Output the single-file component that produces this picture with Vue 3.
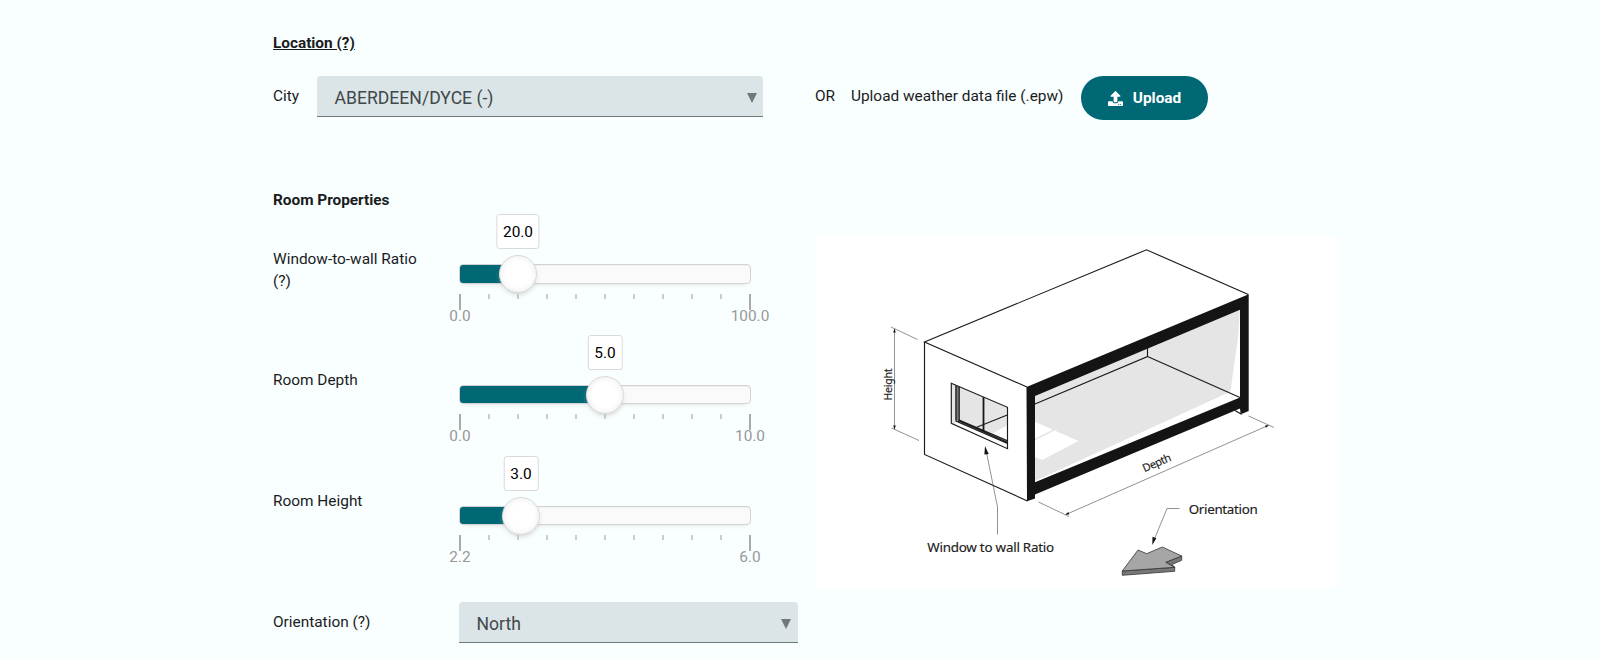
<script setup>
const sliders = [
  { label: 'Window-to-wall Ratio (?)', value: '20.0', min: '0.0', max: '100.0', percent: 20 },
  { label: 'Room Depth', value: '5.0', min: '0.0', max: '10.0', percent: 50 },
  { label: 'Room Height', value: '3.0', min: '2.2', max: '6.0', percent: 21.05 }
]
</script>

<template>
  <main class="page">
    <h2 class="heading underlined">Location (?)</h2>
    <section class="location">
      <div class="city">
        <label class="label">City</label>
        <div class="select">
          <span>ABERDEEN/DYCE (-)</span>
          <svg class="caret" viewBox="0 0 10 10"><path d="M0 0h10L5 10z" /></svg>
        </div>
      </div>
      <div class="upload">
        <span class="label or">OR</span>
        <span class="label file">Upload weather data file (.epw)</span>
        <button class="button" type="button">
          <svg class="icon" viewBox="0 0 512 512"><path d="M296 384h-80c-13.3 0-24-10.7-24-24V192h-87.7c-17.8 0-26.7-21.5-14.1-34.1L242.3 5.7c7.5-7.5 19.8-7.5 27.3 0l152.2 152.2c12.6 12.6 3.7 34.1-14.1 34.1H320v168c0 13.3-10.7 24-24 24zm216-8v112c0 13.3-10.7 24-24 24H24c-13.3 0-24-10.7-24-24V376c0-13.3 10.7-24 24-24h136v8c0 30.9 25.1 56 56 56h80c30.9 0 56-25.1 56-56v-8h136c13.3 0 24 10.7 24 24zm-124 88c0-11-9-20-20-20s-20 9-20 20 9 20 20 20 20-9 20-20zm64 0c0-11-9-20-20-20s-20 9-20 20 9 20 20 20 20-9 20-20z" /></svg>
          <span>Upload</span>
        </button>
      </div>
    </section>

    <section class="room">
      <div class="controls">
        <h2 class="heading">Room Properties</h2>
        <div v-for="s in sliders" :key="s.label" class="row">
          <label class="label">{{ s.label }}</label>
          <div class="slider">
            <div class="track">
              <div class="fill" :style="{ width: s.percent + '%' }"></div>
              <div class="handle" :style="{ left: s.percent + '%' }">
                <div class="tooltip">{{ s.value }}</div>
              </div>
            </div>
            <div class="ticks"><i v-for="n in 11" :key="n"></i></div>
            <div class="range"><span>{{ s.min }}</span><span>{{ s.max }}</span></div>
          </div>
        </div>
        <div class="row orientation">
          <label class="label">Orientation (?)</label>
          <div class="select">
            <span>North</span>
            <svg class="caret" viewBox="0 0 10 10"><path d="M0 0h10L5 10z" /></svg>
          </div>
        </div>
      </div>

      <svg class="diagram" viewBox="815 237 525 350">
        <rect x="815" y="237" width="525" height="350" fill="#fff" />
        <!-- room interior -->
        <path d="M1035 395L1240 309 1238 338 1230.3 391.7 1035 481z" fill="#e5e5e5" />
        <path d="M1035 421.7L1078.3 441 1042.3 460 1035 457z" fill="#fff" />
        <path d="M1035 439.5L1054 430" stroke="#e5e5e5" stroke-width="1.5" />
        <path d="M1147.5 348V356.5L1035 404M1147.5 356.5L1240 397.5" class="line" />
        <!-- outer shell -->
        <path d="M1027 387L924.5 342 1146.5 249.8 1248.3 294.5M924.5 342V454.5L1027.5 501" class="line" />
        <path d="M1235 410.5L1241 414V408" class="line" />
        <path fill-rule="evenodd" d="M1026.5 387L1248.7 294.3V411L1241.5 414 1240 408.5 1035 494.5V498.5L1027 501.3zM1035 396V482.3L1240 397.4V309.7z" fill="#141414" />
        <!-- window -->
        <path d="M951.3 383.3L1007.5 407.3V448.7L951.3 423.3z" fill="#fff" />
        <path d="M951.3 383.3L1007.5 407.3V442L951.3 419z" fill="#e5e5e5" />
        <path d="M993 433L1007 425.5V440z" fill="#fff" />
        <path d="M955.5 421L1007.5 443.5V448.7L955.5 425z" fill="#fff" />
        <path d="M951.3 383.3L955.5 385V424.5L951.3 423.3z" fill="#e5e5e5" />
        <path d="M976.7 427.3L1007.3 415" class="line" />
        <path d="M955.3 385.2L959.5 387V421L955.3 420z" fill="#777" />
        <path d="M956 385.5V421L1007.5 443.5M959.2 387V420L1007.5 440.8M958 420.5L1007.5 442.2" class="line" />
        <path d="M983.5 397V432" stroke="#171717" stroke-width="1.8" />
        <path d="M951.3 383.3L1007.5 407.3V448.7L951.3 423.3z" class="line" />
        <!-- dimension lines -->
        <g class="thin">
          <path d="M894.5 329V429M891 327L917.5 339.5M891.5 428L919 440.5" />
          <path d="M1066 514.5L1268 425.5M1038.5 502L1069 516.5M1248.5 416L1274 427.5" />
          <path d="M986 450L997.5 507V534.5M1179.5 508.5H1167L1154 540" />
        </g>
        <path d="M894.5 328.5l1.3 4h-2.6zM894.5 429.5l1.3-4h-2.6zM1065.3 514.6l4-.2-1-2.3zM1269 425.2l-4 .2 1 2.3zM985 446l3.7 8-4.3.5zM1152.3 545l.2-8.3 3.8 1.5z" fill="#141414" />
        <!-- north arrow -->
        <g stroke="#333" stroke-width=".8" stroke-linejoin="round">
          <path d="M1122.3 571L1174.7 567.3 1165.7 562.3 1181.7 556V560.3L1172 564.5 1174.7 567.3V571.3L1122.3 575.3z" fill="#777" />
          <path d="M1122.3 571L1138 550 1146.7 553.7 1162.3 547 1181.7 556 1165.7 562.3 1174.7 567.3z" fill="#a6a6a6" />
        </g>
        <g class="caption">
          <text x="927.2" y="551.9" font-size="13.4" textLength="127">Window to wall Ratio</text>
          <text x="1188.7" y="513.7" font-size="13.4" textLength="69">Orientation</text>
          <text transform="translate(892.3 400.5) rotate(-90)" font-size="10.5" textLength="32">Height</text>
          <text transform="translate(1144.5 472.3) rotate(-23.5)" font-size="11" textLength="30">Depth</text>
        </g>
      </svg>
    </section>
  </main>
</template>

<style>
html, body { background: #f9feff; }
</style>

<style scoped>
.page {
  box-sizing: border-box;
  width: 1600px;
  height: 661px;
  padding: 32px 260px 0 273px;
  overflow: hidden;
  background: #f9feff;
  color: #191c1d;
  font-family: Roboto, "Liberation Sans", sans-serif;
  font-size: 15.4px;
  line-height: 22px;
}
.heading { margin: 0; font-size: 15.4px; font-weight: 700; line-height: 22px; letter-spacing: -0.03px; }
.underlined { text-decoration: underline; }
.location { display: flex; margin-top: 22px; }
.city { display: flex; width: 490px; }
.city .label { width: 44px; padding-top: 9px; }
.select {
  box-sizing: border-box;
  flex: 1;
  display: flex;
  align-items: center;
  justify-content: space-between;
  height: 41px;
  padding: 3px 6px 0 17.5px;
  border-bottom: 1px solid #6f797a;
  border-radius: 4px 4px 0 0;
  background: #dbe4e6;
  color: #3f484a;
  font-size: 17.6px;
}
.caret { width: 10px; height: 10px; fill: #6f797a; }
.upload { display: flex; margin-left: 52px; }
.upload .label { padding-top: 9px; }
.or { width: 36px; }
.file { width: 230px; }
.button {
  display: flex;
  align-items: center;
  justify-content: center;
  gap: 10px;
  width: 127px;
  height: 44px;
  padding: 0;
  border: 0;
  border-radius: 22px;
  background: #006874;
  color: #fff;
  font: 700 15.4px/22px Roboto, sans-serif;
}
.icon { width: 15px; height: 15px; fill: #fff; }
.room { display: flex; margin-top: 69px; }
.controls { width: 525px; }
.row { display: grid; grid-template-columns: 160px 1fr; column-gap: 26px; height: 120.8px; }
.row .label { padding-top: 37px; }
.slider { width: 292px; padding-top: 53.3px; }
.track {
  position: relative;
  box-sizing: border-box;
  height: 19.3px;
  border: 1px solid #d3d3d3;
  border-radius: 4px;
  background: #fafafa;
  box-shadow: inset 0 1px 1px #f0f0f0, 0 3px 6px -5px #bbb;
}
.fill { height: 100%; border-radius: 3px 0 0 3px; background: #006874; }
.handle {
  position: absolute;
  top: -10.4px;
  box-sizing: border-box;
  width: 38px;
  height: 38px;
  margin-left: -19px;
  border: 1px solid #d9d9d9;
  border-radius: 50%;
  background: #fff;
  box-shadow: inset 0 0 7px #ebebeb, 0 3px 6px -3px #bbb;
}
.tooltip {
  position: absolute;
  bottom: 42.6px;
  left: 50%;
  padding: 5.7px 5.6px 4.3px;
  border: 1px solid #d9d9d9;
  border-radius: 3px;
  background: #fff;
  color: #000;
  line-height: 23px;
  transform: translateX(-50%);
}
.ticks { display: flex; justify-content: space-between; height: 16px; margin-top: 10px; }
.ticks i { width: 2px; height: 5px; background: #ccc; }
.ticks i:first-child, .ticks i:last-child { height: 16px; background: #aaa; }
.range { display: flex; justify-content: space-between; width: 290px; color: #999; margin: -5px 0 0 1px; }
.range span { display: flex; justify-content: center; width: 0; }
.orientation { height: 60px; padding-top: 28.6px; box-sizing: border-box; }
.orientation .label { padding-top: 9px; }
.row.orientation .select { width: 339px; padding-top: 4px; padding-right: 7px; }
.diagram { flex: none; width: 525px; height: 350px; margin: 48px 0 0 17px; }
.line { fill: none; stroke: #1b1b1b; stroke-width: 1.15; }
.thin { fill: none; stroke: #555; stroke-width: .65; }
.caption { fill: #202020; font-family: "Noto Sans", sans-serif; stroke: #202020; stroke-width: .15; }
</style>
